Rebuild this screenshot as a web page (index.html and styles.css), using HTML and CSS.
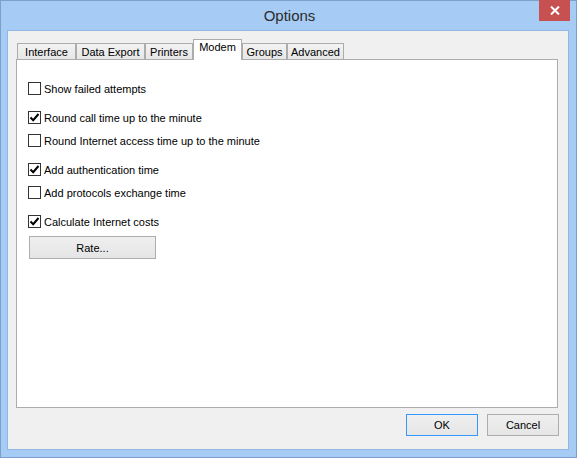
FILE: index.html
```html
<!DOCTYPE html>
<html>
<head>
<meta charset="utf-8">
<link rel="stylesheet" href="styles.css">
</head>
<body>
<div class="window">
  <div class="titlebar">
    <span class="title">Options</span>
    <div class="close">
      <svg width="10" height="9" viewBox="0 0 10 9"><path d="M1 0.5 L9 8.5 M9 0.5 L1 8.5" stroke="#fff" stroke-width="2"/></svg>
    </div>
  </div>
  <div class="client">
    <div class="tabs">
      <div class="tab w-interface">Interface</div>
      <div class="tab w-export">Data Export</div>
      <div class="tab w-printers">Printers</div>
      <div class="tab active w-modem">Modem</div>
      <div class="tab w-groups">Groups</div>
      <div class="tab w-advanced">Advanced</div>
    </div>
    <div class="panel">
      <div class="group">
        <label class="row"><span class="box"></span>Show failed attempts</label>
      </div>
      <div class="group">
        <label class="row"><span class="box"><svg width="11" height="11" viewBox="0 0 11 11"><path d="M1.5 5.5 L4.2 8.2 L9.5 2" fill="none" stroke="#000" stroke-width="2"/></svg></span>Round call time up to the minute</label>
        <label class="row"><span class="box"></span>Round Internet access time up to the minute</label>
      </div>
      <div class="group">
        <label class="row"><span class="box"><svg width="11" height="11" viewBox="0 0 11 11"><path d="M1.5 5.5 L4.2 8.2 L9.5 2" fill="none" stroke="#000" stroke-width="2"/></svg></span>Add authentication time</label>
        <label class="row"><span class="box"></span>Add protocols exchange time</label>
      </div>
      <div class="group">
        <label class="row"><span class="box"><svg width="11" height="11" viewBox="0 0 11 11"><path d="M1.5 5.5 L4.2 8.2 L9.5 2" fill="none" stroke="#000" stroke-width="2"/></svg></span>Calculate Internet costs</label>
        <button class="btn rate">Rate...</button>
      </div>
    </div>
    <div class="footer">
      <button class="btn ok">OK</button>
      <button class="btn">Cancel</button>
    </div>
  </div>
</div>
</body>
</html>
```
FILE: styles.css
```css
* { box-sizing: border-box; }
html, body { margin: 0; padding: 0; }
body {
  width: 577px;
  height: 458px;
  font-family: "Liberation Sans", Arial, sans-serif;
  font-size: 11px;
  color: #000;
  background: #a6cbf5;
}
.window {
  position: relative;
  width: 577px;
  height: 458px;
  border: 1px solid #7d9fcb;
  background: #a6cbf5;
  padding: 0 7px 7px 6px;
  display: flex;
  flex-direction: column;
}
.titlebar {
  height: 29px;
  display: flex;
  align-items: center;
  justify-content: center;
}
.title {
  font-size: 15px;
  color: #2b2b2b;
  margin-left: 3px;
  margin-top: -1px;
}
.close {
  position: absolute;
  top: -1px;
  right: 6px;
  width: 31px;
  height: 21px;
  background: #c75050;
  display: flex;
  align-items: center;
  justify-content: center;
}
.client {
  flex: 1;
  background: #f0f0f0;
  border: 1px solid #93b7e3;
  padding: 8px 10px 0 8px;
  display: flex;
  flex-direction: column;
}
.tabs {
  display: flex;
  align-items: flex-end;
  height: 20px;
  padding-left: 1px;
  position: relative;
  z-index: 1;
}
.tab {
  height: 16px;
  border: 1px solid #acacac;
  border-bottom: none;
  background: linear-gradient(#f2f2f2, #e7e7e7);
  display: flex;
  align-items: center;
  justify-content: center;
  line-height: 1;
  padding-top: 1px;
  color: #000;
}
.tab.active {
  height: 21px;
  margin-bottom: -1px;
  background: #fff;
  padding-top: 0;
  padding-bottom: 6px;
}
.w-interface { width: 59px; }
.w-export { width: 69px; }
.w-printers { width: 48px; }
.w-modem { width: 49px; }
.w-groups { width: 45px; }
.w-advanced { width: 57px; }
.panel {
  width: 542px;
  height: 349px;
  background: #fff;
  border: 1px solid #acacac;
  padding: 22px 11px 0 11px;
  display: flex;
  flex-direction: column;
  gap: 16px;
}
.group {
  display: flex;
  flex-direction: column;
  gap: 10px;
}
.row {
  display: flex;
  align-items: center;
  height: 13px;
  gap: 3px;
  white-space: nowrap;
  color: #000;
}
.box {
  width: 13px;
  height: 13px;
  border: 1px solid #333;
  background: #fff;
  display: flex;
  align-items: center;
  justify-content: center;
  flex: none;
}
.btn {
  font-family: "Liberation Sans", Arial, sans-serif;
  font-size: 11px;
  color: #000;
  width: 72px;
  height: 22px;
  border: 1px solid #adadad;
  background: linear-gradient(#efefef, #e5e5e5);
  padding: 0;
  display: flex;
  align-items: center;
  justify-content: center;
}
.rate {
  width: 127px;
  height: 23px;
  margin-top: -2px;
  margin-left: 1px;
}
.footer {
  display: flex;
  justify-content: flex-end;
  gap: 9px;
  margin-top: 6px;
  margin-right: -1px;
}
.ok { border-color: #3399ff; }
```
